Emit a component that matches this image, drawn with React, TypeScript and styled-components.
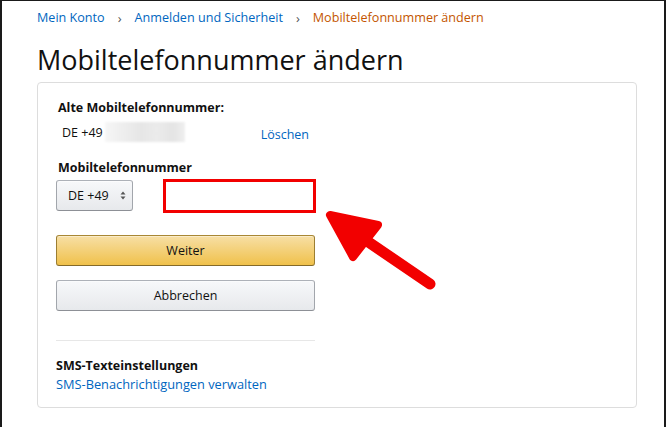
import React from "react";
import styled, { createGlobalStyle } from "styled-components";

const Global = createGlobalStyle`
  html, body { margin: 0; padding: 0; background: #fff; }
  body { font-family: "Open Sans", "Liberation Sans", Arial, sans-serif; color: #111; }
  * { box-sizing: border-box; }
`;

const Frame = styled.div`
  position: relative;
  width: 666px;
  height: 427px;
  border-top: 1px solid #1a1a1a;
  border-left: 2px solid #1a1a1a;
  border-right: 2px solid #1a1a1a;
  padding-left: 35px;
  overflow: hidden;
`;

const Breadcrumb = styled.nav`
  display: flex;
  align-items: center;
  padding-top: 8px;
  height: 26px;
  font-size: 12.6px;
  line-height: 18px;
`;

const Crumb = styled.a<{ $current?: boolean }>`
  color: ${(p) => (p.$current ? "#c45500" : "#0066c0")};
  text-decoration: none;
`;

const Sep = styled.span`
  color: #555;
  margin: 0 13px;
  font-size: 13px;
`;

const Title = styled.h1`
  margin: 15px 0 4px;
  font-size: 27px;
  line-height: 36px;
  font-weight: 400;
  color: #111;
  letter-spacing: 0;
`;

const Card = styled.section`
  width: 600px;
  height: 326px;
  border: 1px solid #ddd;
  border-radius: 4px;
  padding: 16px 18px;
`;

const Column = styled.div`
  width: 259px;
  display: flex;
  flex-direction: column;
`;

const Label = styled.div`
  font-size: 12.5px;
  font-weight: 700;
  line-height: 18px;
  padding-left: 2px;
`;

const OldRow = styled.div`
  display: flex;
  align-items: center;
  height: 24px;
  margin-top: 3px;
  font-size: 12.5px;
`;

const Number = styled.span`
  margin-left: 6px;
`;

const Blur = styled.span`
  display: inline-block;
  width: 80px;
  height: 20px;
  margin-left: 2px;
  background: linear-gradient(
    90deg,
    #f6f6f6 0%,
    #ededed 25%,
    #e6e6e6 45%,
    #ebebeb 65%,
    #e4e4e4 85%,
    #f0f0f0 100%
  );
  filter: blur(1px);
`;

const Link = styled.a`
  color: #0066c0;
  text-decoration: none;
  font-size: 12.8px;
`;

const DeleteLink = styled(Link)`
  margin-left: auto;
  margin-right: 6px;
  padding-top: 4px;
  font-size: 12.5px;
`;

const NewLabel = styled(Label)`
  margin-top: 15px;
`;

const InputRow = styled.div`
  display: flex;
  align-items: center;
  margin-top: 3px;
  height: 31px;
`;

const SelectButton = styled.div`
  width: 77px;
  height: 31px;
  display: flex;
  align-items: center;
  padding: 0 0 0 11px;
  gap: 11px;
  font-size: 12.5px;
  border: 1px solid;
  border-color: #adb1b8 #a2a6ac #8d9096;
  border-radius: 3px;
  background: linear-gradient(#f7f8fa, #e7e9ec);
  box-shadow: inset 0 1px 0 rgba(255, 255, 255, 0.6);
`;

const Button = styled.button<{ $primary?: boolean }>`
  width: 259px;
  height: 31px;
  font-family: inherit;
  font-size: 12.5px;
  color: #111;
  border: 1px solid;
  border-radius: 3px;
  border-color: ${(p) =>
    p.$primary ? "#a88734 #9c7e31 #846a29" : "#adb1b8 #a2a6ac #8d9096"};
  background: ${(p) =>
    p.$primary
      ? "linear-gradient(#f7dfa5, #f0c14b)"
      : "linear-gradient(#f7f8fa, #e7e9ec)"};
  box-shadow: inset 0 1px 0 rgba(255, 255, 255, 0.4);
  margin-top: ${(p) => (p.$primary ? "24px" : "14px")};
  padding: 0;
`;

const Divider = styled.hr`
  width: 259px;
  border: 0;
  border-top: 1px solid #e7e7e7;
  margin: 29px 0 0;
`;

const SectionTitle = styled.div`
  font-size: 12.5px;
  font-weight: 700;
  line-height: 18px;
  margin-top: 16px;
`;

const SmsLink = styled(Link)`
  line-height: 18px;
`;

const Highlight = styled.div`
  position: absolute;
  left: 161px;
  top: 178px;
  width: 153px;
  height: 34px;
  border: 3px solid #f20000;
  pointer-events: none;
`;

const ArrowSvg = styled.svg`
  position: absolute;
  left: 0;
  top: 0;
  pointer-events: none;
`;

export default function App() {
  return (
    <>
      <Global />
      <Frame>
        <Breadcrumb>
          <Crumb href="#">Mein Konto</Crumb>
          <Sep>›</Sep>
          <Crumb href="#">Anmelden und Sicherheit</Crumb>
          <Sep>›</Sep>
          <Crumb $current>Mobiltelefonnummer ändern</Crumb>
        </Breadcrumb>
        <Title>Mobiltelefonnummer ändern</Title>
        <Card>
          <Column>
            <Label>Alte Mobiltelefonnummer:</Label>
            <OldRow>
              <Number>DE +49</Number>
              <Blur />
              <DeleteLink href="#">Löschen</DeleteLink>
            </OldRow>
            <NewLabel>Mobiltelefonnummer</NewLabel>
            <InputRow>
              <SelectButton>
                <span>DE +49</span>
                <svg width="6" height="9" viewBox="0 0 6 9">
                  <path d="M3 0.5 L5.5 3.5 H0.5 Z" fill="#555" />
                  <path d="M3 8.5 L5.5 5.5 H0.5 Z" fill="#555" />
                </svg>
              </SelectButton>
            </InputRow>
            <Button $primary>Weiter</Button>
            <Button>Abbrechen</Button>
            <Divider />
            <SectionTitle>SMS-Texteinstellungen</SectionTitle>
            <SmsLink href="#">SMS-Benachrichtigungen verwalten</SmsLink>
          </Column>
        </Card>
        <Highlight />
        <ArrowSvg width="666" height="427" viewBox="0 0 666 427">
          <line
            x1="362"
            y1="238"
            x2="428"
            y2="283"
            stroke="#f20000"
            strokeWidth="11"
            strokeLinecap="round"
          />
          <polygon
            points="328,214 376,224 351,256"
            fill="#f20000"
            stroke="#f20000"
            strokeWidth="8"
            strokeLinejoin="round"
          />
        </ArrowSvg>
      </Frame>
    </>
  );
}
